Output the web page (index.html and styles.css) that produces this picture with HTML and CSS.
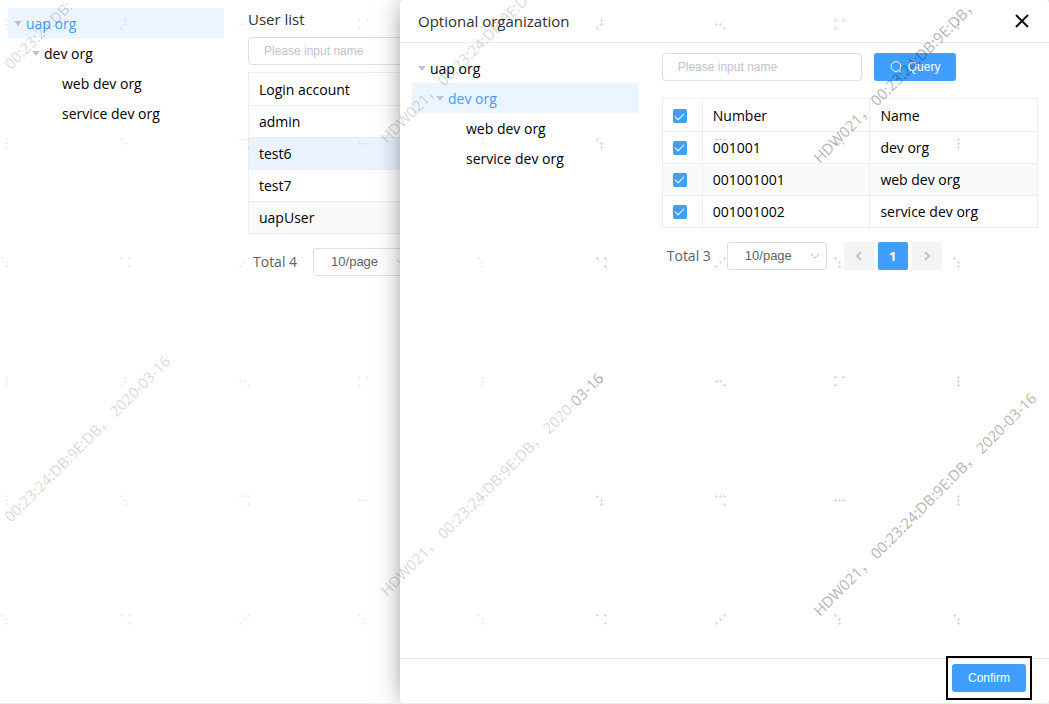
FILE: index.html
```
<!DOCTYPE html>
<html lang="en">
<head>
<meta charset="utf-8">
<title>User management</title>
<link rel="stylesheet" href="styles.css">
</head>
<body>
<div class="app">
  <div class="page">
    <nav class="tree page-tree" aria-label="Organizations">
      <a class="node level-1 active" href="#"><i class="caret"></i>uap org</a>
      <a class="node level-2" href="#"><i class="caret"></i>dev org</a>
      <a class="node level-3" href="#">web dev org</a>
      <a class="node level-3" href="#">service dev org</a>
    </nav>
    <main class="users">
      <h1 class="title">User list</h1>
      <input class="field wide" type="text" placeholder="Please input name" aria-label="User name">
      <table class="grid user-grid">
        <thead><tr><th>Login account</th></tr></thead>
        <tbody>
          <tr><td>admin</td></tr>
          <tr class="selected"><td>test6</td></tr>
          <tr><td>test7</td></tr>
          <tr class="striped"><td>uapUser</td></tr>
        </tbody>
      </table>
      <div class="pager">
        <span class="total">Total 4</span>
        <span class="select-box">
          <select aria-label="Users per page"><option>10/page</option></select>
          <svg class="chevron" viewBox="0 0 10 6"><path d="M1 1l4 4 4-4"/></svg>
        </span>
      </div>
    </main>
  </div>

  <section class="drawer" role="dialog" aria-labelledby="drawer-title">
    <header class="drawer-head">
      <h2 class="title" id="drawer-title">Optional organization</h2>
      <button class="close" type="button" aria-label="Close"><svg viewBox="0 0 14 14"><path d="M1 1l12 12M13 1L1 13"/></svg></button>
    </header>
    <div class="drawer-body">
      <nav class="tree drawer-tree" aria-label="Optional organizations">
        <a class="node level-1" href="#"><i class="caret"></i>uap org</a>
        <a class="node level-2 active" href="#"><i class="caret"></i>dev org</a>
        <a class="node level-3" href="#">web dev org</a>
        <a class="node level-3" href="#">service dev org</a>
      </nav>
      <div class="orgs">
        <form class="search">
          <input class="field" type="text" placeholder="Please input name" aria-label="Organization name">
          <button class="primary query" type="button"><svg viewBox="0 0 12 12"><circle cx="6" cy="5.5" r="4.9"/><path d="M8.8 9l1.8 2.5"/></svg>Query</button>
        </form>
        <table class="grid org-grid">
          <thead>
            <tr><th class="pick"><input type="checkbox" checked aria-label="Select all"></th><th>Number</th><th>Name</th></tr>
          </thead>
          <tbody>
            <tr><td class="pick"><input type="checkbox" checked aria-label="Select dev org"></td><td>001001</td><td>dev org</td></tr>
            <tr class="striped"><td class="pick"><input type="checkbox" checked aria-label="Select web dev org"></td><td>001001001</td><td>web dev org</td></tr>
            <tr><td class="pick"><input type="checkbox" checked aria-label="Select service dev org"></td><td>001001002</td><td>service dev org</td></tr>
          </tbody>
        </table>
        <div class="pager">
          <span class="total">Total 3</span>
          <span class="select-box">
            <select aria-label="Organizations per page"><option>10/page</option></select>
            <svg class="chevron" viewBox="0 0 10 6"><path d="M1 1l4 4 4-4"/></svg>
          </span>
          <span class="steps">
            <button class="step" type="button" disabled aria-label="Previous page"><svg viewBox="0 0 8 10"><path d="M6 1L2 5l4 4"/></svg></button>
            <button class="step current" type="button">1</button>
            <button class="step" type="button" disabled aria-label="Next page"><svg viewBox="0 0 8 10"><path d="M2 1l4 4-4 4"/></svg></button>
          </span>
        </div>
      </div>
    </div>
    <footer class="drawer-foot">
      <button class="primary confirm" type="button">Confirm</button>
    </footer>
  </section>

  <svg class="watermark" aria-hidden="true">
    <defs>
      <path id="d" d="M-1 .5h3M.5-1v3"/>
      <pattern id="dots" width="476" height="357" patternUnits="userSpaceOnUse">
        <g class="dots">
          <use href="#d" x="6" y="20"/><use href="#d" x="6" y="24"/><use href="#d" x="6" y="28"/>
          <use href="#d" x="125" y="20"/><use href="#d" x="125" y="24"/><use href="#d" x="121" y="28"/>
          <use href="#d" x="240" y="24"/><use href="#d" x="244" y="24"/><use href="#d" x="248" y="28"/>
          <use href="#d" x="359" y="20"/><use href="#d" x="367" y="20"/><use href="#d" x="359" y="28"/>
          <use href="#d" x="6" y="139"/><use href="#d" x="6" y="143"/><use href="#d" x="6" y="147"/>
          <use href="#d" x="121" y="139"/><use href="#d" x="125" y="143"/><use href="#d" x="125" y="147"/>
          <use href="#d" x="240" y="139"/><use href="#d" x="244" y="139"/><use href="#d" x="248" y="139"/><use href="#d" x="248" y="147"/>
          <use href="#d" x="359" y="143"/><use href="#d" x="363" y="143"/><use href="#d" x="367" y="143"/>
          <use href="#d" x="2" y="258"/><use href="#d" x="6" y="262"/><use href="#d" x="6" y="266"/>
          <use href="#d" x="121" y="258"/><use href="#d" x="129" y="258"/><use href="#d" x="129" y="266"/>
          <use href="#d" x="248" y="258"/><use href="#d" x="244" y="262"/><use href="#d" x="240" y="266"/>
          <use href="#d" x="359" y="258"/><use href="#d" x="363" y="262"/><use href="#d" x="363" y="266"/>
        </g>
      </pattern>
    </defs>
    <rect class="dots-left" width="575" height="100%" fill="url(#dots)"/>
    <rect class="dots-right" x="575" width="100%" height="100%" fill="url(#dots)"/>
    <g class="marks">
      <text class="pale" transform="translate(11 523) rotate(-45)">00:23:24:DB:9E:DB， 2020-03-16</text>
      <text class="pale" transform="translate(11 70) rotate(-45)">00:23:24:DB:</text>
      <text class="pale" transform="translate(387 597) rotate(-45)">HDW021， 00:23:24:DB:9E:DB， 2020-<tspan>03-16</tspan></text>
      <text class="pale" transform="translate(387 144) rotate(-45)">HDW021， 00:23:24:DB:9E:D</text>
      <text class="deep" transform="translate(820 617) rotate(-45)">HDW021， 00:23:24:DB:9E:DB， 2020-03-16</text>
      <text class="deep" transform="translate(820 164) rotate(-45)">HDW021， 00:23:24:DB:9E:DB，</text>
    </g>
  </svg>
</div>
</body>
</html>
```
FILE: styles.css
```
* { box-sizing: border-box; }

body {
  margin: 0;
  background: #fff;
  color: #000;
  font: 14px/20px "Open Sans", "Noto Sans", "Noto Sans CJK SC", sans-serif;
}

button, input, select { font: 12px/16px "Liberation Sans", Arial, sans-serif; }

.app {
  position: relative;
  min-height: 100vh;
  overflow: hidden;
  border-bottom: 1px solid #eee;
}

.page {
  display: flex;
  gap: 24px;
  padding: 8px 0 0 8px;
}

.page-tree { flex: 0 0 216px; }
.users { flex: 1; }

.title {
  margin: 0;
  color: #303133;
  font-size: 15px;
  font-weight: 400;
  line-height: 22px;
}

.node {
  display: flex;
  align-items: center;
  height: 30px;
  padding-top: 2px;
  color: #000;
  text-decoration: none;
}

.level-1 { padding-left: 6px; }
.level-2 { padding-left: 24px; }
.level-3 { padding-left: 54px; }
.node.active { background: #ebf4ff; color: #409eff; }

.caret {
  width: 8px;
  margin: 0 4px 2px 0;
  border: 4px solid transparent;
  border-top: 5px solid #c0c4cc;
  border-bottom: 0;
}

.field {
  width: 200px;
  height: 28px;
  padding: 0 15px;
  border: 1px solid #dcdfe6;
  border-radius: 4px;
  background: #fff;
}

.field::placeholder { color: #c0c4cc; opacity: 1; }
.wide { display: block; width: 240px; margin: 7px 0; }

.grid {
  width: 100%;
  border-collapse: collapse;
  table-layout: fixed;
}

.grid th, .grid td {
  height: 32px;
  padding: 0 10px;
  border: 1px solid #ebeef5;
  font-weight: 400;
  text-align: left;
}

.grid th { height: 33px; padding-top: 2px; }
.grid .pick { width: 40px; }
.grid .selected { background: #ebf3ff; }
.grid .striped { background: #fafafa; }

.pick input {
  display: grid;
  place-items: center;
  width: 14px;
  height: 14px;
  margin: 0;
  border-radius: 2px;
  background: #409eff;
  appearance: none;
}

.pick input::after {
  content: "";
  width: 4px;
  height: 8px;
  margin-bottom: 2px;
  border: solid #fff;
  border-width: 0 1px 1px 0;
  rotate: 45deg;
}

.pager {
  display: flex;
  align-items: center;
  margin-top: 14px;
  padding-left: 5px;
  color: #606266;
}

.select-box { position: relative; margin-left: 16px; }

.select-box select {
  display: block;
  width: 100px;
  height: 28px;
  padding: 0 17px;
  border: 1px solid #dcdfe6;
  border-radius: 3px;
  background: #fff;
  color: #606266;
  font-size: 13px;
  appearance: none;
}

.chevron {
  position: absolute;
  top: 11px;
  right: 7px;
  width: 10px;
  height: 6px;
}

.chevron path, .step path { fill: none; stroke: #c0c4cc; }

.steps { display: flex; gap: 4px; margin-left: 17px; }

.step {
  display: grid;
  place-items: center;
  width: 30px;
  height: 28px;
  padding: 0;
  border: 0;
  border-radius: 2px;
  background: #f4f4f5;
}

.step svg { width: 8px; height: 10px; }
.step path { stroke-width: 2; }

.step.current {
  background: #409eff;
  color: #fff;
  font: 700 13px/28px "Noto Sans", sans-serif;
}

.drawer {
  position: absolute;
  inset: 0 0 0 400px;
  display: flex;
  flex-direction: column;
  border-radius: 4px;
  background: #fff;
  box-shadow: 0 0 24px -4px rgb(0 0 0 / 50%);
}

.drawer-head {
  display: flex;
  align-items: center;
  justify-content: space-between;
  height: 43px;
  padding: 0 20px 1px 18px;
  border-bottom: 1px solid #eaeaea;
}

.close {
  display: grid;
  width: 14px;
  padding: 0;
  border: 0;
  background: none;
}

.close svg { width: 14px; height: 14px; }
.close path { stroke: #111; stroke-width: 2; }

.drawer-body {
  display: flex;
  flex: 1;
  gap: 24px;
  padding: 10px 11px 0 12px;
}

.drawer-tree { flex: 3; }
.orgs { flex: 5; }

.search { display: flex; gap: 12px; margin-bottom: 17px; }

.primary {
  height: 28px;
  padding: 0 16px;
  border: 0;
  border-radius: 3px;
  background: #409eff;
  color: #fff;
}

.query { display: flex; align-items: center; gap: 6px; }
.query svg { width: 12px; height: 12px; fill: none; stroke: #fff; }

.drawer-foot {
  display: flex;
  justify-content: flex-end;
  height: 45px;
  padding: 5px 23px 0 0;
  border-top: 1px solid #eaeaea;
}

.confirm { position: relative; }

.confirm::after {
  content: "";
  position: absolute;
  inset: -8px -6px;
  border: 2px solid #000;
}

.watermark {
  position: absolute;
  inset: 0;
  width: 100%;
  height: 100%;
  pointer-events: none;
}

.dots { stroke: #000; }
.dots-left { opacity: .06; }
.dots-right { opacity: .14; }
.marks { font-family: "Noto Sans", "Noto Sans CJK SC", sans-serif; font-size: 15px; }
.pale { fill: rgb(0 0 0 / 17%); }
.pale tspan, .deep { fill: rgb(0 0 0 / 30%); }
```
